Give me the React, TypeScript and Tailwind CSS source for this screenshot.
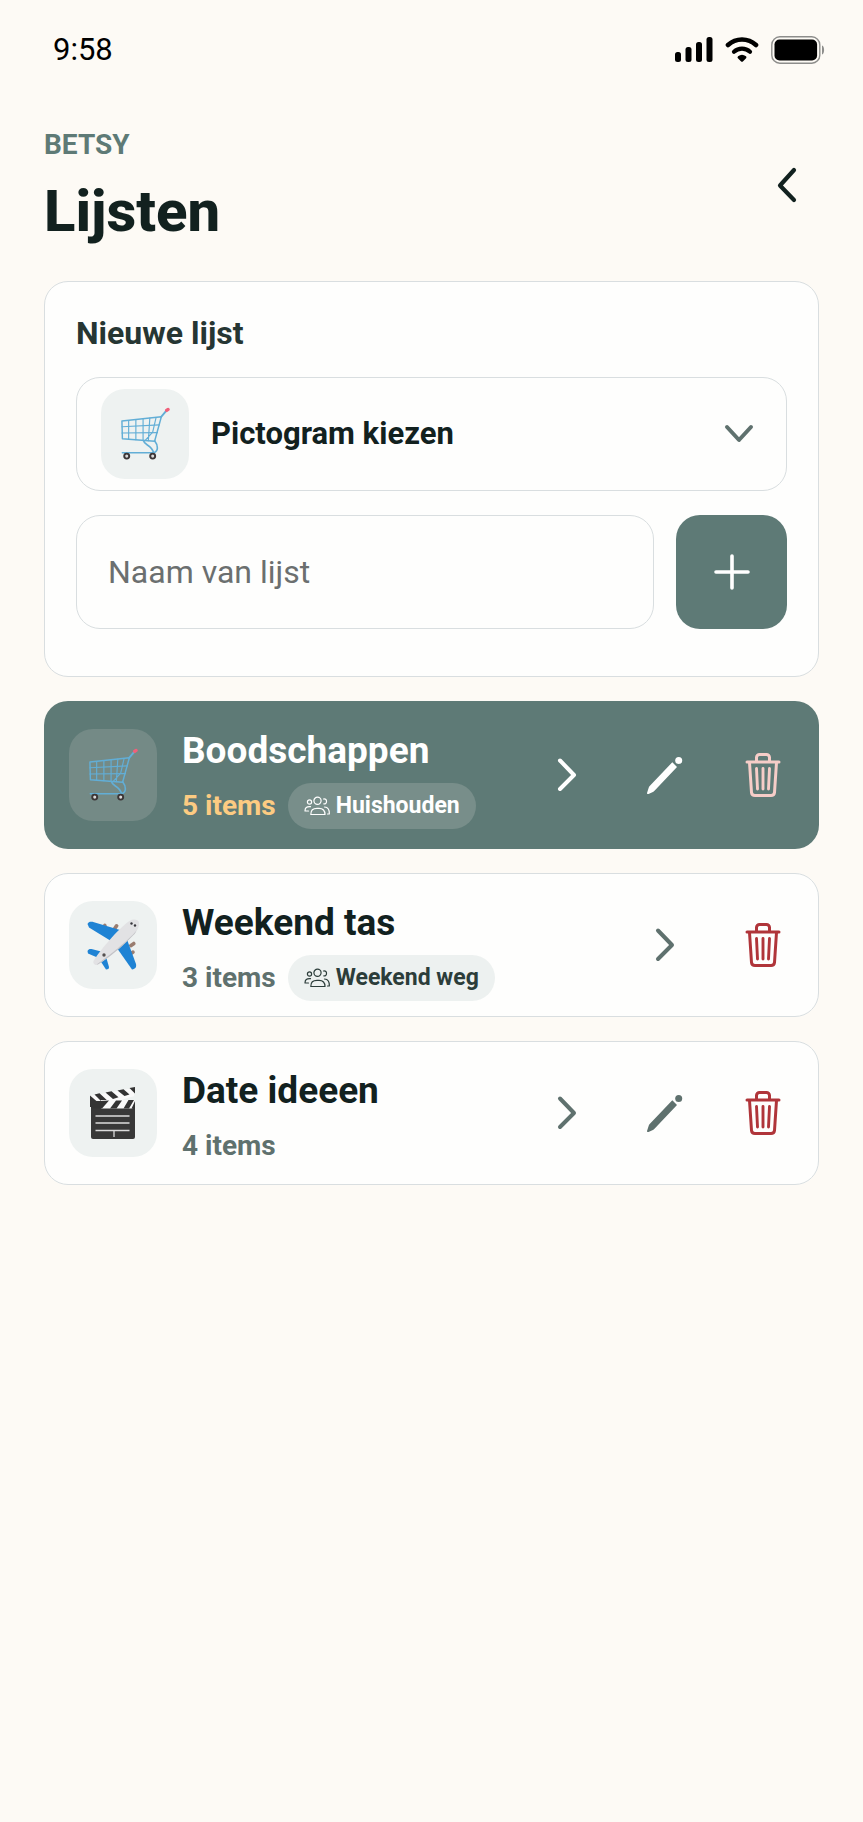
import { useState } from 'react';
import type { FormEvent, ReactNode } from 'react';
import clsx from 'clsx';

type Pictogram = 'cart' | 'plane' | 'film';

interface ShoppingList {
    id: string;
    name: string;
    count: number;
    pictogram: Pictogram;
    sharedWith?: string;
    editable: boolean;
}

const initialLists: ShoppingList[] = [
    { id: 'boodschappen', name: 'Boodschappen', count: 5, pictogram: 'cart', sharedWith: 'Huishouden', editable: true },
    { id: 'weekend-tas', name: 'Weekend tas', count: 3, pictogram: 'plane', sharedWith: 'Weekend weg', editable: false },
    { id: 'date-ideeen', name: 'Date ideeen', count: 4, pictogram: 'film', editable: true },
];

const CartPicture = () => (
    <svg viewBox="0 0 52 56" className="w-[50px] h-[54px]" fill="none" aria-hidden="true">
        <g stroke="#62aed6" strokeLinecap="round" strokeLinejoin="round">
            <path d="M2 14.5 43 10 36 35.5 2.5 33Z" strokeWidth="1.5" />
            <path d="M2 20.5 41 18.5M2 27 39 26.5" strokeWidth="1.2" />
            <path d="M9 14v19.5M16.5 13v21M24 12.3v22.2M31 11.5 29.5 35M37.5 11 34 26 26 35" strokeWidth="1.2" />
            <path d="M48.500 3.500 43 10" strokeWidth="2" />
            <path d="M36 35c4 5 4 11-1 12.500M24.500 35c1 5 8 4 10.500 12.500H2.500" strokeWidth="1.700" />
        </g>
        <path d="m48.500 3.500 1.500-1" stroke="#f0607a" strokeWidth="3.400" strokeLinecap="round" />
        <circle cx="7" cy="51" r="2.600" fill="#d9d9d9" stroke="#3b3536" strokeWidth="2" />
        <circle cx="34" cy="51" r="2.600" fill="#d9d9d9" stroke="#3b3536" strokeWidth="2" />
    </svg>
);

const PlanePicture = () => (
    <svg viewBox="0 0 54 54" className="w-[54px] h-[54px]" aria-hidden="true">
        <g fill="#9a7d70">
            <rect x="16" y="5.500" width="3.600" height="7" rx="1.500" transform="rotate(35 18 9)" />
            <rect x="28" y="6" width="3.600" height="7" rx="1.500" transform="rotate(35 30 9)" />
            <rect x="44" y="23" width="3.600" height="7" rx="1.500" transform="rotate(55 46 27)" />
            <rect x="44" y="32" width="3.600" height="7" rx="1.500" transform="rotate(55 46 35)" />
        </g>
        <path d="M1.500 6C2.500 3.500 5 3.500 8 4.200L34 12 25 23 3 9.500Z" fill="#1f83d4" />
        <path d="M41 21.500 50 46c.6 3-.5 5-4 5.500L29.500 28Z" fill="#1f83d4" />
        <path d="M1.500 33c1-2 2.500-2.300 4-2L17 34 12.500 40 2 35.500Z" fill="#1f83d4" />
        <path d="m19.500 37 3.500 12c0 1.800-1 2.500-3 2.500L13.500 41.500Z" fill="#1f83d4" />
        <path d="M7.500 43C13 34 32 10.500 43.500 3c4-2.500 9-1.500 9.500 1.500C53.500 8 52 12 48.500 15.500 39 26 24 38.500 15 44.500c-3 2-4.500 3-6 2.300C7.500 46 7 44.500 7.500 43Z" fill="#e2e2e4" />
        <path d="M10.500 46.500C22 38.500 42 23 50.500 12.500c-1 3-3 4.500-5 6.500C36 29 24 38.500 15 44.500c-2 1.300-3.500 2.500-4.500 2Z" fill="#c3c3c7" />
        <circle cx="45.500" cy="5.500" r="1.200" fill="#38383d" />
        <circle cx="49" cy="7.500" r="1.200" fill="#38383d" />
        <circle cx="18" cy="37" r="1.700" fill="#55504f" />
    </svg>
);

const FilmPicture = () => (
    <svg viewBox="0 0 48 54" className="w-[48px] h-[54px]" aria-hidden="true">
        <path d="M2 21h44v30a2 2 0 0 1-2 2H4a2 2 0 0 1-2-2Z" fill="#383838" />
        <path d="M1 10 45 2v8L12 20.500 1 21Z" fill="#fafafa" />
        <g fill="#343434">
            <path d="m1 9.500 10.500 9-4 2.500H1Z" />
            <path d="m5.500 8.500 5-1.200 7.500 6.900-5 1.800ZM16.500 6.500l6-1.200 7 6-5.500 1.600ZM28.500 4.500l6-1.200 6 5.200-5 1.600ZM40.500 2 46 1v6.500Z" />
        </g>
        <path d="M12 14h34v7l-3 1.500H12Z" fill="#fafafa" />
        <path d="m11 15 9-.5-7 8H2V15ZM27 14.500h6l-5.500 8h-6.500ZM39.500 14h5.500L40 22.500h-5.500ZM46 15v7.500h-3.500Z" fill="#343434" />
        <path d="M6.500 30h34M6.500 37h34M6.500 44.500h34M25 45v6" stroke="#dcdcdc" strokeWidth="1.300" />
    </svg>
);

const pictures: Record<Pictogram, ReactNode> = {
    cart: <CartPicture />,
    plane: <PlanePicture />,
    film: <FilmPicture />,
};

const PeopleIcon = () => (
    <svg viewBox="0 0 26 20" className="w-[26px] h-5 shrink-0" fill="none" stroke="currentColor" strokeWidth="1.200" strokeLinecap="round" strokeLinejoin="round" aria-hidden="true">
        <circle cx="13.500" cy="4.800" r="3.600" />
        <circle cx="5.500" cy="6" r="2.100" />
        <path d="M19.500 3c2.200-.4 3.200.9 3 2.700-.1 1.500-1.200 2.400-2.700 2.200" />
        <path d="M6.800 18.500c0-4.500 2-6.200 6.200-6.200h2c4 0 6 1.700 6 6.200Z" />
        <path d="M4.500 15H1c0-3.300 1.500-4.500 5.500-4.300M20.500 11c3.600 0 5 3 4.800 7h-1.800" />
    </svg>
);

const ChevronIcon = () => (
    <svg viewBox="0 0 20 36" className="w-5 h-9" fill="none" stroke="currentColor" strokeWidth="4" strokeLinecap="round" strokeLinejoin="round" aria-hidden="true">
        <path d="m3 3.500 14 14.500L3 32" />
    </svg>
);

const PencilIcon = () => (
    <svg viewBox="0 0 38 40" className="w-[38px] h-10" fill="currentColor" aria-hidden="true">
        <path d="M26.300 7.200 31 11.900 8.500 35.700c-.5.500-1 .9-1.600 1.200L2.500 39c-1 .4-1.700-.3-1.400-1.300l1.600-5c.2-.7.500-1.200 1-1.700Z" />
        <circle cx="32.700" cy="5.500" r="3.500" />
    </svg>
);

const TrashIcon = () => (
    <svg viewBox="0 0 36 46" className="w-9 h-[46px]" fill="none" stroke="currentColor" strokeLinecap="round" strokeLinejoin="round" aria-hidden="true">
        <path d="M2 10h32M11.500 9.500V5.500A3 3 0 0 1 14.500 2.500h7a3 3 0 0 1 3 3v4" strokeWidth="3" />
        <path d="M4.500 10.500 6.500 40.500a3.500 3.500 0 0 0 3.500 3h16a3.500 3.500 0 0 0 3.500-3L31.500 10.500" strokeWidth="3" />
        <path d="m11.500 16.500 1 20.500M18 16.500V37M24.500 16.500l-1 20.500" strokeWidth="2.900" />
    </svg>
);

const StatusBar = () => (
    <div className="flex items-center justify-between pt-8 pl-[9px] text-black">
        <span className="text-[31px] leading-9">9:58</span>
        <div className="flex items-center gap-3 -mr-1.5" aria-hidden="true">
            <svg viewBox="0 0 38 26" className="w-[38px] h-[26px]" fill="currentColor">
                <rect x="0" y="15" width="6" height="10" rx="2.500" />
                <rect x="10.500" y="10" width="6" height="15" rx="2.500" />
                <rect x="21" y="5" width="6" height="20" rx="2.500" />
                <rect x="31.500" y="0" width="6" height="25" rx="2.500" />
            </svg>
            <svg viewBox="0 0 34 26" className="w-[34px] h-[26px]" fill="none" stroke="currentColor" strokeWidth="4.600" strokeLinecap="round">
                <path d="M3 8C11 .6 23 .6 31 8" />
                <path d="M9 14.800c4.500-4.200 11.500-4.200 16 0" strokeWidth="4.200" />
                <path d="M13.800 20.300c1.900-1.500 4.500-1.500 6.400 0L17 23.500Z" fill="currentColor" strokeWidth="2.500" strokeLinejoin="round" />
            </svg>
            <svg viewBox="0 0 54 28" className="w-[54px] h-7">
                <rect x="0.800" y="0.800" width="48" height="26.400" rx="8" fill="none" stroke="#8d8d8b" strokeWidth="1.400" />
                <rect x="3.500" y="3.500" width="42.600" height="21" rx="5" fill="currentColor" />
                <path d="M51 9.500c2.800.6 2.800 8.400 0 9Z" fill="#8d8d8b" />
            </svg>
        </div>
    </div>
);

interface ListRowProps {
    list: ShoppingList;
    active: boolean;
    onSelect: () => void;
    onDelete: () => void;
}

const ListRow = ({ list, active, onSelect, onDelete }: ListRowProps) => {
    const iconColor = active ? 'text-white' : 'text-[#5f716e]';

    return (
        <li
            className={clsx(
                'flex items-center rounded-3xl pl-[25px] pr-[7px]',
                active ? 'bg-[#5e7a76]' : 'bg-[#fefefd] outline outline-[#d9dee0] -outline-offset-1'
            )}
        >
            <div
                className={clsx(
                    'my-7 w-[88px] shrink-0 rounded-3xl flex items-center justify-center',
                    active ? 'h-[92px] bg-[#748a86]' : 'h-[88px] bg-[#eef2f1]'
                )}
            >
                {pictures[list.pictogram]}
            </div>

            <div className="flex-1 min-w-0 self-start pt-7 pl-[25px]">
                <h2 className={clsx('text-[37px] leading-[44px] font-bold whitespace-nowrap', active ? 'text-white' : 'text-[#12211f]')}>
                    {list.name}
                </h2>
                <div className="mt-2.5 flex items-center gap-3 whitespace-nowrap">
                    <span className={clsx('text-[28px] leading-[46px] font-bold', active ? 'text-[#fccb82]' : 'text-[#5f716e]')}>
                        {list.count} items
                    </span>
                    {list.sharedWith && (
                        <span
                            className={clsx(
                                'flex items-center gap-1.5 rounded-full px-4 text-[23px] leading-[46px] font-bold',
                                active ? 'bg-[#788e8a] text-white' : 'bg-[#edf1f0] text-[#2c3d3a]'
                            )}
                        >
                            <PeopleIcon />
                            {list.sharedWith}
                        </span>
                    )}
                </div>
            </div>

            <div className={clsx('flex shrink-0', iconColor)}>
                <button type="button" onClick={onSelect} aria-label={`${list.name} openen`} className="w-[98px] h-20 flex items-center justify-center">
                    <ChevronIcon />
                </button>
                {list.editable && (
                    <button type="button" aria-label={`${list.name} bewerken`} className="w-[98px] h-20 flex items-center justify-center">
                        <PencilIcon />
                    </button>
                )}
                <button
                    type="button"
                    onClick={onDelete}
                    aria-label={`${list.name} verwijderen`}
                    className={clsx('w-[98px] h-20 flex items-center justify-center', active ? 'text-[#f6cdc8]' : 'text-[#b0353a]')}
                >
                    <TrashIcon />
                </button>
            </div>
        </li>
    );
};

const App = () => {
    const [lists, setLists] = useState(initialLists);
    const [activeId, setActiveId] = useState('boodschappen');
    const [name, setName] = useState('');
    const [pictogram, setPictogram] = useState<Pictogram | ''>('');

    const handleAdd = (e: FormEvent) => {
        e.preventDefault();
        if (!name.trim()) return;
        setLists([
            ...lists,
            { id: String(Date.now()), name: name.trim(), count: 0, pictogram: pictogram || 'cart', editable: true },
        ]);
        setName('');
    };

    return (
        <div className="min-h-screen bg-[#fdfaf5] px-11 pb-11 font-[Roboto,'Liberation_Sans',sans-serif]">
            <StatusBar />

            <header className="mt-[59px] flex items-center justify-between">
                <div>
                    <p className="text-[28px] leading-9 font-bold text-[#5e7a76]">BETSY</p>
                    <h1 className="mt-4 text-[58px] leading-[64px] font-extrabold text-[#12211f]">Lijsten</h1>
                </div>
                <button type="button" aria-label="Terug" className="w-16 h-16 flex items-center justify-center text-[#12211f]">
                    <svg viewBox="0 0 20 36" className="w-5 h-9" fill="none" stroke="currentColor" strokeWidth="4.200" strokeLinecap="round" strokeLinejoin="round" aria-hidden="true">
                        <path d="M17 3 3 18.500 17 33" />
                    </svg>
                </button>
            </header>

            <main className="mt-[38px] flex flex-col gap-6">
                {/* New list */}
                <form onSubmit={handleAdd} className="flex flex-col gap-6 rounded-3xl border border-[#d9dee0] bg-[#fefefd] px-[31px] pt-[31px] pb-[47px]">
                    <h2 className="text-[32px] leading-10 font-bold text-[#263633]">Nieuwe lijst</h2>

                    <div className="flex h-[114px] items-center rounded-3xl border border-[#d9dee0] pl-6 pr-8">
                        <div className="w-[88px] h-[90px] shrink-0 rounded-3xl bg-[#eef2f1] flex items-center justify-center">
                            {pictures[pictogram || 'cart']}
                        </div>
                        <select
                            aria-label="Pictogram kiezen"
                            value={pictogram}
                            onChange={(e) => setPictogram(e.target.value as Pictogram)}
                            className="ml-[22px] flex-1 h-full appearance-none bg-transparent text-[31px] font-bold text-[#12211f] outline-none"
                        >
                            <option value="">Pictogram kiezen</option>
                            <option value="cart">Winkelwagen</option>
                            <option value="plane">Vliegtuig</option>
                            <option value="film">Film</option>
                        </select>
                        <svg viewBox="0 0 30 20" className="w-[30px] h-5 shrink-0" fill="none" stroke="#5f716e" strokeWidth="4" strokeLinecap="round" strokeLinejoin="round" aria-hidden="true">
                            <path d="m3 3 12 13L27 3" />
                        </svg>
                    </div>

                    <div className="flex gap-[22px]">
                        <input
                            type="text"
                            aria-label="Naam van lijst"
                            placeholder="Naam van lijst"
                            value={name}
                            onChange={(e) => setName(e.target.value)}
                            className="h-[114px] min-w-0 flex-1 rounded-3xl border border-[#d9dee0] bg-transparent px-[31px] text-[32px] text-[#12211f] placeholder:text-[#6b6f6f] outline-none"
                        />
                        <button type="submit" aria-label="Lijst toevoegen" className="w-[111px] h-[114px] shrink-0 rounded-3xl bg-[#5e7a76] flex items-center justify-center text-white">
                            <svg viewBox="0 0 36 36" className="w-9 h-9" fill="none" stroke="currentColor" strokeWidth="3.600" strokeLinecap="round" aria-hidden="true">
                                <path d="M18 2v32M2 18h32" />
                            </svg>
                        </button>
                    </div>
                </form>

                {/* Existing lists */}
                <ul className="flex flex-col gap-6">
                    {lists.map(list => (
                        <ListRow
                            key={list.id}
                            list={list}
                            active={list.id === activeId}
                            onSelect={() => setActiveId(list.id)}
                            onDelete={() => setLists(lists.filter(l => l.id !== list.id))}
                        />
                    ))}
                </ul>
            </main>
        </div>
    );
};

export default App;
